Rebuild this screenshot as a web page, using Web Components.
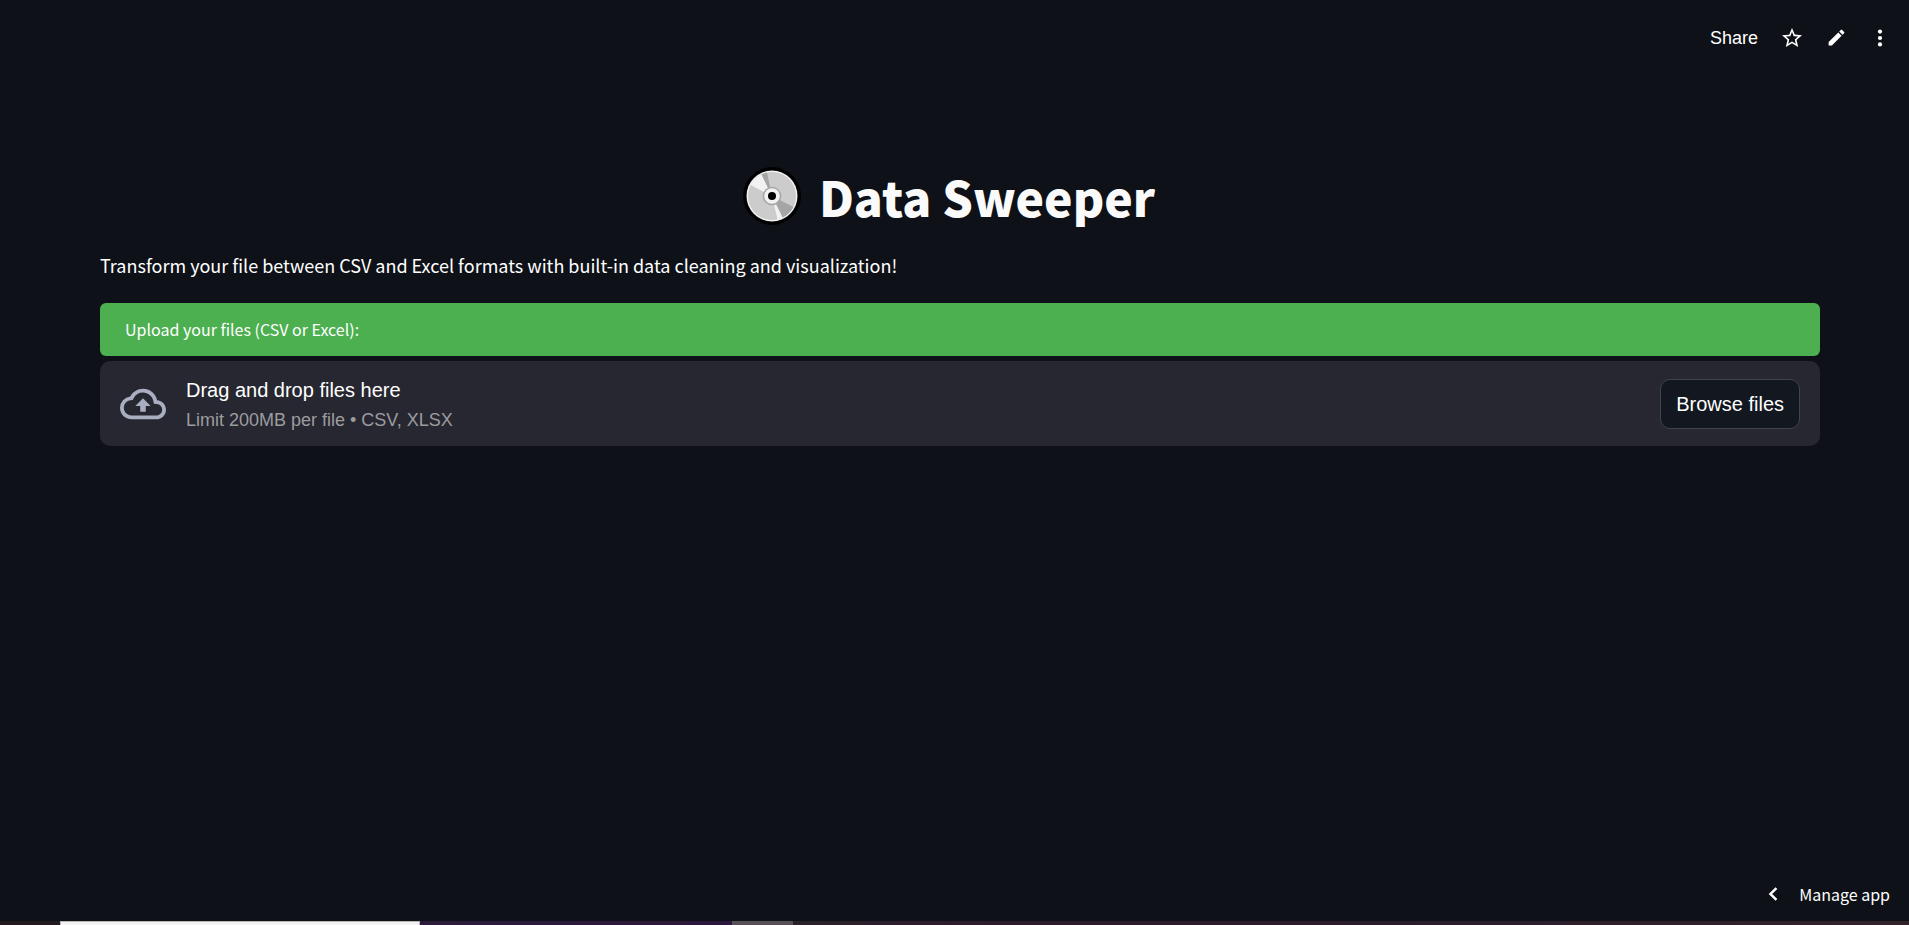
<!DOCTYPE html>
<html lang="en">
<head>
<meta charset="utf-8">
<title>Data Sweeper</title>
<style>
  html, body { height: 100%; }
  body {
    margin: 0;
    background: #0e1117;
    color: #fafafa;
    --body-font: "Noto Sans CJK SC", "Noto Sans", sans-serif;
    --ui-font: "Liberation Sans", Arial, sans-serif;
    font-family: var(--body-font);
  }
</style>
</head>
<body>
<sweeper-app></sweeper-app>

<script>
const define = (name, html) => {
  const template = document.createElement('template');
  template.innerHTML = html;
  customElements.define(name, class extends HTMLElement {
    constructor() {
      super();
      this.attachShadow({ mode: 'open' }).append(template.content.cloneNode(true));
    }
  });
};

define('app-toolbar', `
  <style>
    :host { display: flex; justify-content: flex-end; align-items: center; gap: 22px; height: 75px; padding-right: 18px; font-family: var(--ui-font); }
    button { display: flex; align-items: center; background: none; border: 0; padding: 0; margin: 0; color: #fff; font: inherit; font-size: 18px; line-height: 24px; cursor: pointer; }
    svg { display: block; fill: currentColor; }
  </style>
  <button type="button">Share</button>
  <button type="button" aria-label="Favorite">
    <svg width="24" height="24" viewBox="0 0 24 24"><path d="M22 9.24l-7.19-.62L12 2 9.19 8.63 2 9.24l5.46 4.73L5.82 21 12 17.27 18.18 21l-1.63-7.03L22 9.24zM12 15.4l-3.76 2.27 1-4.28-3.32-2.88 4.38-.38L12 6.1l1.71 4.04 4.38.38-3.32 2.88 1 4.28L12 15.4z"/></svg>
  </button>
  <button type="button" aria-label="Edit">
    <svg width="21" height="21" viewBox="0 0 24 24"><path d="M3 17.25V21h3.75L17.81 9.94l-3.75-3.75L3 17.25zM20.71 7.04a1 1 0 0 0 0-1.41l-2.34-2.34a1 1 0 0 0-1.41 0l-1.83 1.83 3.75 3.75 1.83-1.83z"/></svg>
  </button>
  <button type="button" aria-label="More options">
    <svg width="22" height="22" viewBox="0 0 24 24"><circle cx="12" cy="5" r="2.3"/><circle cx="12" cy="12" r="2.3"/><circle cx="12" cy="19" r="2.3"/></svg>
  </button>
`);

define('disc-icon', `
  <style>
    :host { display: block; width: 58px; height: 58px; }
    svg { display: block; width: 100%; height: 100%; }
  </style>
  <svg viewBox="0 0 58 58" aria-hidden="true">
    <circle cx="29" cy="29" r="29" fill="#000"/>
    <circle cx="29" cy="29" r="25.5" fill="#f2f2f2"/>
    <circle cx="29" cy="29" r="24" fill="#ccc"/>
    <path d="M29 29 7.6 18.1A24 24 0 0 1 18.5 7.4Z" fill="#f2f2f2"/>
    <path d="M29 29 18.5 7.4A24 24 0 0 1 24 5.5Z" fill="#a5a5a5"/>
    <path d="M29 29 50.4 39.9A24 24 0 0 1 39.5 50.6Z" fill="#a5a5a5"/>
    <path d="M29 29 39.5 50.6A24 24 0 0 1 34.5 52.4Z" fill="#f2f2f2"/>
    <circle cx="29" cy="29" r="9.3" fill="#a5a5a5"/>
    <circle cx="29" cy="29" r="7.8" fill="#f2f2f2"/>
    <circle cx="29" cy="29" r="4" fill="#000"/>
  </svg>
`);

define('page-title', `
  <style>
    :host { display: flex; justify-content: center; padding-right: 22px; }
    h1 { display: flex; align-items: center; gap: 18px; margin: 0; font-size: 48px; line-height: 64px; font-weight: 900; }
  </style>
  <h1><slot name="icon"></slot><span><slot></slot></span></h1>
`);

define('file-uploader', `
  <style>
    :host { display: flex; flex-direction: column; gap: 5px; }
    label { display: block; padding: 14px 25px 15px; border-radius: 6px; background: #4caf50; color: #fff; font-size: 16px; line-height: 24px; }
    .zone { display: flex; align-items: center; gap: 20px; min-height: 85px; box-sizing: border-box; padding: 0 20px; border-radius: 10px; background: #262730; font-family: var(--ui-font); }
    svg { flex: none; fill: #a9aec1; }
    .text { flex: 1; display: flex; flex-direction: column; }
    .main { font-size: 20px; line-height: 32px; color: #fff; }
    .hint { font-size: 18px; line-height: 28px; color: #9c9c9f; }
    button { height: 50px; padding: 0 15px; border: 1px solid #41444c; border-radius: 10px; background: #131720; color: #fff; font: 20px/24px var(--ui-font); cursor: pointer; }
    input { display: none; }
  </style>
  <label for="files"><slot></slot></label>
  <div class="zone">
    <svg width="46" height="46" viewBox="0 0 24 24" aria-hidden="true"><path d="M19.35 10.04A7.49 7.49 0 0 0 12 4C9.11 4 6.6 5.64 5.35 8.04A5.994 5.994 0 0 0 0 14c0 3.31 2.69 6 6 6h13c2.76 0 5-2.24 5-5 0-2.64-2.05-4.78-4.65-4.96zM19 18H6c-2.21 0-4-1.79-4-4 0-2.05 1.53-3.76 3.56-3.97l1.07-.11.5-.95A5.469 5.469 0 0 1 12 6c2.62 0 4.88 1.86 5.39 4.43l.3 1.5 1.53.11A2.98 2.98 0 0 1 22 15c0 1.65-1.35 3-3 3zM8 13h2.55v3h2.9v-3H16l-4-4z"/></svg>
    <div class="text">
      <span class="main">Drag and drop files here</span>
      <span class="hint">Limit 200MB per file • CSV, XLSX</span>
    </div>
    <input id="files" type="file" accept=".csv,.xlsx" multiple>
    <button type="button">Browse files</button>
  </div>
`);

define('manage-app', `
  <style>
    :host { display: flex; justify-content: flex-end; padding: 0 19px 15px 0; }
    button { display: flex; align-items: center; gap: 16px; background: none; border: 0; padding: 0; color: #fff; font: inherit; font-size: 16px; line-height: 24px; cursor: pointer; }
    svg { display: block; fill: currentColor; }
  </style>
  <button type="button">
    <svg width="22" height="22" viewBox="0 0 24 24" aria-hidden="true"><path d="M17.8 6.6 15.9 4.7 8.4 12l7.5 7.3 1.9-1.9L12.2 12z"/></svg>
    <span>Manage app</span>
  </button>
`);

define('desktop-edge', `
  <style>
    :host { display: grid; grid-template-columns: 60px 360px 312px 61px 1fr; height: 4px; overflow: hidden; }
    .a { background: #231b20; }
    .b { background: #f3f3f3; border: solid #b9b4b4; border-width: 1px 1px 0; }
    .c { background: linear-gradient(90deg, #2c1c3a, #2b173b); }
    .d { background: #575157; }
    .e { background: linear-gradient(90deg, #29222a, #2e1b2c 15%, #2b1d2b 60%, #33222a); }
  </style>
  <div class="a"></div><div class="b"></div><div class="c"></div><div class="d"></div><div class="e"></div>
`);

define('sweeper-app', `
  <style>
    :host { display: flex; flex-direction: column; min-height: 100%; }
    main { flex: 1; padding: 89px 89px 0 100px; }
    p { margin: 21px 0 22px; font-size: 18px; line-height: 32px; color: #fff; }
  </style>
  <app-toolbar></app-toolbar>
  <main>
    <page-title><disc-icon slot="icon"></disc-icon>Data Sweeper</page-title>
    <p>Transform your file between CSV and Excel formats with built-in data cleaning and visualization!</p>
    <file-uploader>Upload your files (CSV or Excel):</file-uploader>
  </main>
  <manage-app></manage-app>
  <desktop-edge></desktop-edge>
`);
</script>
</body>
</html>
